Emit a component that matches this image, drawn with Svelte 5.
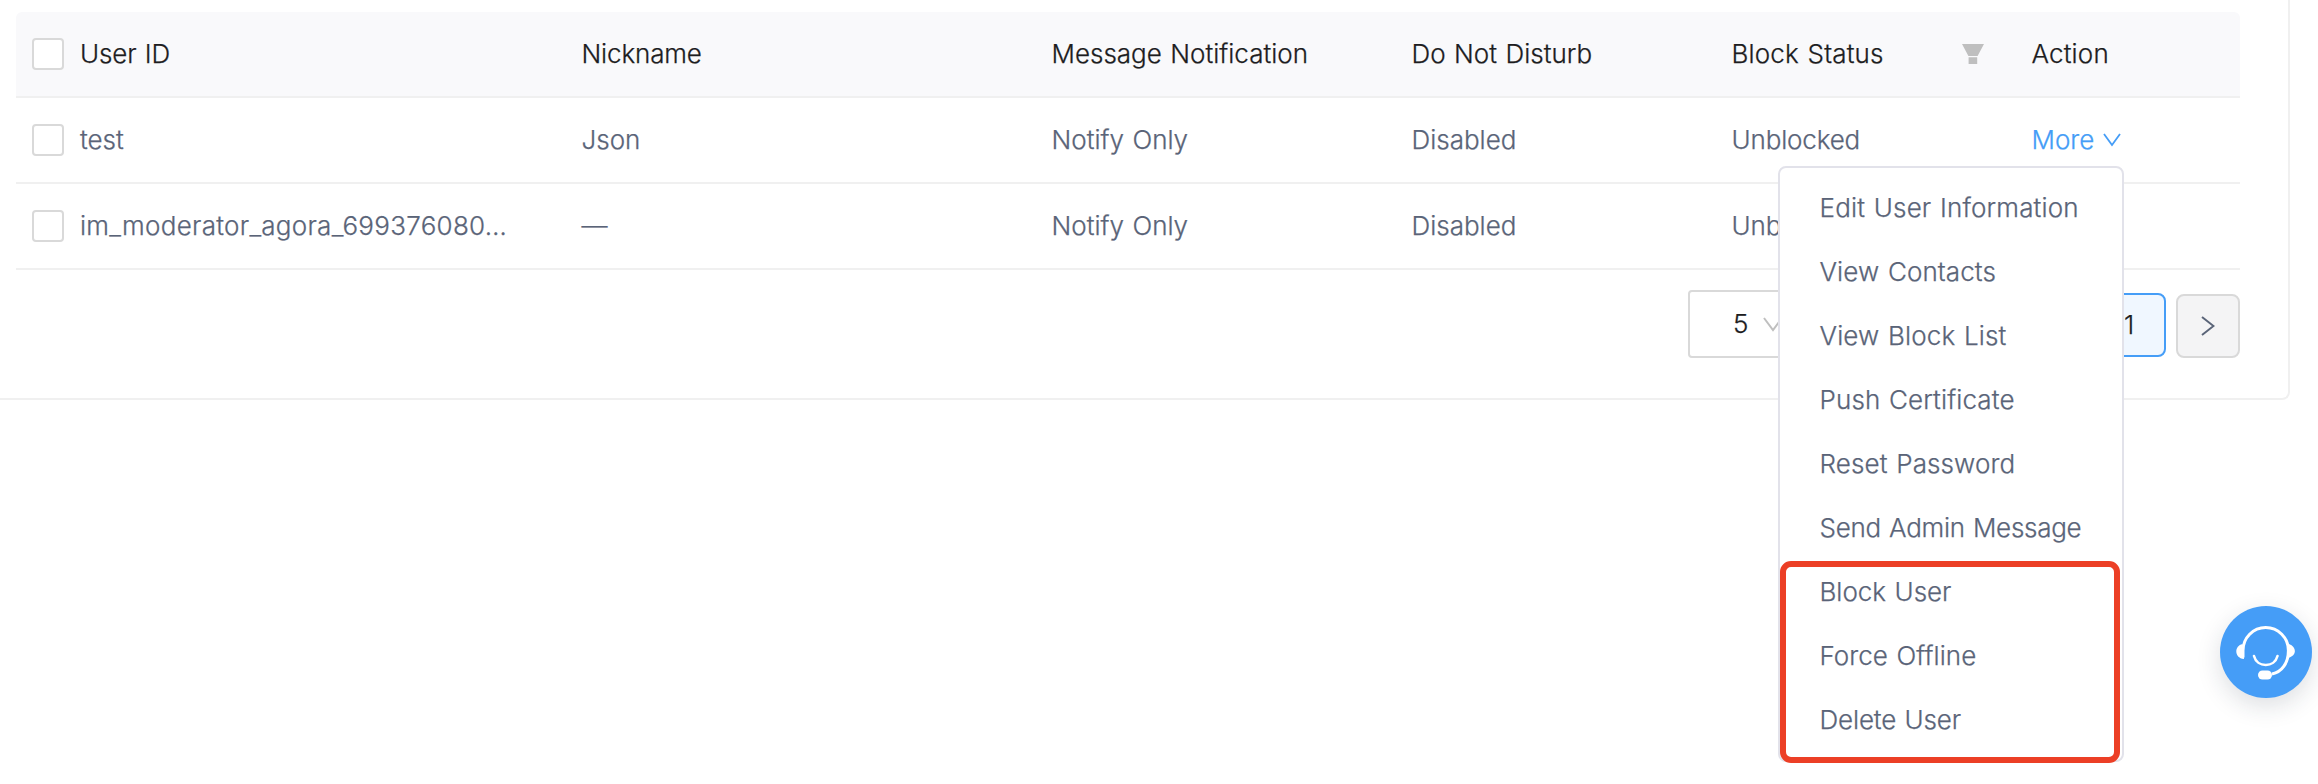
<script>
  const rows = [
    { id: 'test', nick: 'Json', notify: 'Notify Only', dnd: 'Disabled', status: 'Unblocked', more: true },
    { id: 'im_moderator_agora_699376080…', long: true, nick: '—', notify: 'Notify Only', dnd: 'Disabled', status: 'Unblocked', more: false }
  ];
  const actions = [
    { label: 'Edit User Information', track: 0.16 },
    { label: 'View Contacts', track: 0.1 },
    { label: 'View Block List', track: 0.13 },
    { label: 'Push Certificate', track: 0.12 },
    { label: 'Reset Password', track: 0.12 },
    { label: 'Send Admin Message', track: -0.28 },
    { label: 'Block User', track: -0.02 },
    { label: 'Force Offline', track: 0.05 },
    { label: 'Delete User', track: -0.15 }
  ];
</script>

<main class="page">
  <section class="card">
    <div class="table">
      <div class="row head">
        <div class="cell first"><span class="check"></span><span class="txt tight">User ID</span></div>
        <div class="cell"><span class="txt tight">Nickname</span></div>
        <div class="cell"><span class="txt">Message Notification</span></div>
        <div class="cell"><span class="txt">Do Not Disturb</span></div>
        <div class="cell status"><span class="txt wide">Block Status</span>
          <svg width="22" height="20" viewBox="0 0 22 20"><path d="M0 0H22L15.6 12H6.4ZM6.6 13.2H15.2V20H6.6Z" fill="#bfbfbf" /></svg>
        </div>
        <div class="cell"><span class="txt wide">Action</span></div>
      </div>
      {#each rows as row}
        <div class="row">
          <div class="cell first"><span class="check"></span><span class="txt" class:long={row.long}>{row.id}</span></div>
          <div class="cell"><span class="txt">{row.nick}</span></div>
          <div class="cell"><span class="txt">{row.notify}</span></div>
          <div class="cell"><span class="txt">{row.dnd}</span></div>
          <div class="cell"><span class="txt tight">{row.status}</span></div>
          {#if row.more}
            <div class="cell more"><span class="txt">More</span>
              <svg width="18" height="14" viewBox="0 0 18 14"><path d="M1 1L9 12L17 1" fill="none" stroke="currentColor" stroke-width="1.8" /></svg>
            </div>
          {/if}
        </div>
      {/each}
    </div>
    <div class="pager">
      <div class="size"><span class="txt">5</span>
        <svg width="20" height="15" viewBox="0 0 20 15"><path d="M1 1L10 13L19 1" fill="none" stroke="#bfbfbf" stroke-width="2" /></svg>
      </div>
      <div class="current"><span class="txt">1</span></div>
      <div class="next">
        <svg width="14" height="20" viewBox="0 0 14 20"><path d="M1 1L12.5 10L1 19" fill="none" stroke="#5a6478" stroke-width="2" /></svg>
      </div>
    </div>
  </section>

  <div class="menu">
    {#each actions as action}
      <div class="item"><span class="txt" style="letter-spacing: {action.track}px">{action.label}</span></div>
    {/each}
    <div class="highlight"></div>
  </div>

  <div class="support">
    <svg width="92" height="92" viewBox="0 0 92 92" fill="none" stroke="#fff">
      <path d="M23 51.500V44.500A22.700 23 0 0 1 68.400 44.500C68.400 57 62 66 52 68" stroke-width="3" />
      <path d="M34 50C37 62 54.500 62 57.500 50" stroke-width="2.600" stroke-linecap="round" />
      <path d="M22.500 38C14 40 14 52 24 53L23.500 45ZM69 38C77 41 77 50 68 52Z" fill="#fff" stroke="none" />
      <rect x="38" y="64.500" width="14" height="9" rx="4.500" fill="#fff" stroke="none" />
    </svg>
  </div>
</main>

<style>
  :global(body) { margin: 0; background: #fff; }
  .page {
    position: relative; width: 2318px; height: 784px; overflow: hidden; background: #fff;
    font-family: Inter, "Liberation Sans", sans-serif; font-size: 26px; font-weight: 340; color: #5a6478;
    word-spacing: 1.2px; -webkit-text-stroke: 0.25px currentColor;
  }
  .card {
    box-sizing: border-box; width: 2290px; height: 400px; padding: 12px 48px 0 16px;
    border: solid #f0f0f0; border-width: 0 2px 2px 0; border-bottom-right-radius: 8px;
  }
  .row {
    display: grid; grid-template-columns: 565.5px 470px 360px 320px 300px 208.5px;
    height: 84px; align-items: center; border-bottom: 2px solid #f0f0f0;
  }
  .head { background: #f9f9fb; color: #1d1d1f; border-radius: 6px 6px 0 0; }
  .cell { display: flex; align-items: center; white-space: nowrap; }
  .txt { padding-bottom: 1px; }
  .wide { letter-spacing: 0.15px; }
  .tight { letter-spacing: -0.15px; }
  .long { letter-spacing: 0.28px; }
  .first { padding-left: 16px; gap: 16px; }
  .check { box-sizing: border-box; width: 32px; height: 32px; border: 2px solid #d9d9d9; border-radius: 4px; background: #fff; }
  .status { justify-content: space-between; padding-right: 48px; }
  .more { color: #459df7; gap: 9px; }
  .pager { display: flex; align-items: flex-end; height: 88px; color: #1d1d1f; }
  .size {
    box-sizing: border-box; display: flex; align-items: center; gap: 15px; width: 120px; height: 68px;
    margin-left: 1672px; padding-left: 43px; border: 2px solid #d9d9d9; border-radius: 4px;
  }
  .current, .next {
    box-sizing: border-box; display: flex; align-items: center; justify-content: center;
    width: 64px; height: 64px; border: 2px solid #459df7; border-radius: 8px;
  }
  .current { margin: 0 10px 1px auto; padding-right: 10px; background: #f0f7ff; }
  .next { border-color: #d9d9d9; background: #f4f4f5; }
  .menu {
    position: absolute; box-sizing: border-box; left: 1778px; top: 166px; width: 346px; height: 596px;
    padding: 8px 0; border: 2px solid #e2e2ea; border-radius: 8px; background: #fff;
  }
  .item { display: flex; align-items: center; height: 64px; padding-left: 39.5px; white-space: nowrap; }
  .highlight {
    position: absolute; box-sizing: border-box; left: 0; top: 393px; width: 340px; height: 202px;
    border: 6px solid #ec3f26; border-radius: 11px;
  }
  .support {
    position: absolute; left: 2220px; top: 606px; width: 92px; height: 92px; border-radius: 50%;
    background: #459df7; box-shadow: 0 8px 24px rgba(30, 40, 60, 0.15);
  }
  svg { display: block; flex: none; }
</style>
